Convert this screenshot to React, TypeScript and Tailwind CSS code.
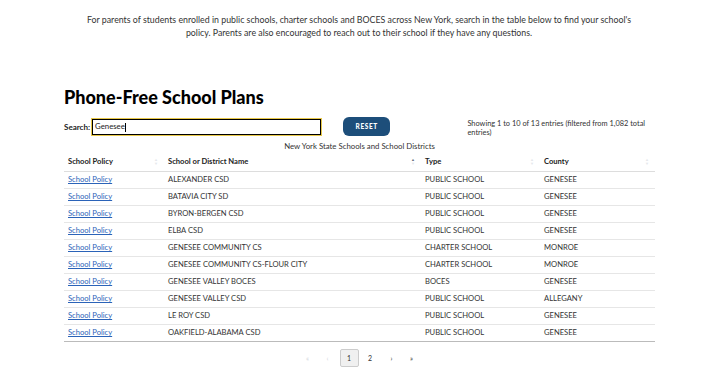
const rows = [
  ['ALEXANDER CSD', 'PUBLIC SCHOOL', 'GENESEE'],
  ['BATAVIA CITY SD', 'PUBLIC SCHOOL', 'GENESEE'],
  ['BYRON-BERGEN CSD', 'PUBLIC SCHOOL', 'GENESEE'],
  ['ELBA CSD', 'PUBLIC SCHOOL', 'GENESEE'],
  ['GENESEE COMMUNITY CS', 'CHARTER SCHOOL', 'MONROE'],
  ['GENESEE COMMUNITY CS-FLOUR CITY', 'CHARTER SCHOOL', 'MONROE'],
  ['GENESEE VALLEY BOCES', 'BOCES', 'GENESEE'],
  ['GENESEE VALLEY CSD', 'PUBLIC SCHOOL', 'ALLEGANY'],
  ['LE ROY CSD', 'PUBLIC SCHOOL', 'GENESEE'],
  ['OAKFIELD-ALABAMA CSD', 'PUBLIC SCHOOL', 'GENESEE'],
]

function SortIcon({ active }: { active?: boolean }) {
  return (
    <span className="flex flex-col items-center leading-none text-[4px]">
      <span className={active ? 'text-gray-500' : 'text-gray-200'}>▲</span>
      <span className="text-gray-200">▼</span>
    </span>
  )
}

function HeaderCell({ label, active }: { label: string; active?: boolean }) {
  return (
    <div className="flex items-center justify-between pl-[4px] pr-[6px]">
      <span>{label}</span>
      <SortIcon active={active} />
    </div>
  )
}

export default function App() {
  return (
    <div className="w-[718px] h-[377px] bg-white overflow-hidden text-[#222]" style={{ fontFamily: 'Lato, "Open Sans", sans-serif' }}>
      <p className="pt-[13px] text-center text-[8.8px] leading-[13px] text-[#333] px-[60px]">
        For parents of students enrolled in public schools, charter schools and BOCES across New York, search in the table below to find your school's
        <br />
        policy. Parents are also encouraged to reach out to their school if they have any questions.
      </p>

      <div className="mx-[64px] w-[591px]">
        <h1 className="mt-[47px] text-[18px] font-black leading-[22px] text-black">Phone-Free School Plans</h1>

        <div className="mt-[9px] flex items-start">
          <div className="flex items-center mt-[2px]">
            <span className="text-[8px] font-bold">Search:</span>
            <div className="ml-[2px] w-[229px] h-[16px] border border-black outline outline-[1.5px] outline-[#e8c84a] flex items-center px-[2px] text-[7.8px]">
              Genesee<span className="w-px h-[9px] bg-black" />
            </div>
          </div>
          <button className="ml-[22px] w-[48px] h-[19px] rounded-[6px] bg-[#1d4e7a] text-white text-[6.5px] font-black tracking-[0.6px]">
            RESET
          </button>
          <div className="ml-[77px] w-[190px] text-[7.4px] leading-[9px] text-[#333] mt-[2px]">
            Showing 1 to 10 of 13 entries (filtered from 1,082 total entries)
          </div>
        </div>

        <div className="mt-[5px] text-center text-[7.8px] text-[#333] leading-[9px]">
          New York State Schools and School Districts
        </div>

        <div className="mt-[2px] grid grid-cols-[100px_257px_119px_115px] text-[7.6px] font-bold h-[19px] items-center border-b border-[#ddd]">
          <HeaderCell label="School Policy" />
          <HeaderCell label="School or District Name" active />
          <HeaderCell label="Type" />
          <HeaderCell label="County" />
        </div>

        {rows.map((r, i) => (
          <div
            key={i}
            className={`grid grid-cols-[100px_257px_119px_115px] h-[17px] items-center text-[7.6px] text-[#333] border-b ${i === rows.length - 1 ? 'border-[#bbb]' : 'border-[#e6e6e6]'}`}
          >
            <a href="#" className="pl-[4px] text-[#2b63b8] underline">School Policy</a>
            <span className="pl-[4px]">{r[0]}</span>
            <span className="pl-[4px]">{r[1]}</span>
            <span className="pl-[4px]">{r[2]}</span>
          </div>
        ))}

        <div className="mt-[7px] flex justify-center items-center text-[7px] text-[#333]">
          <span className="w-[20px] text-center text-gray-300">«</span>
          <span className="w-[20px] text-center text-gray-300">‹</span>
          <span className="ml-[2px] w-[19px] h-[18px] flex items-center justify-center border border-[#ccc] bg-[#f0f0f0] rounded-[2px]">1</span>
          <span className="w-[23px] text-center">2</span>
          <span className="w-[20px] text-center">›</span>
          <span className="w-[20px] text-center">»</span>
        </div>
      </div>
    </div>
  )
}
